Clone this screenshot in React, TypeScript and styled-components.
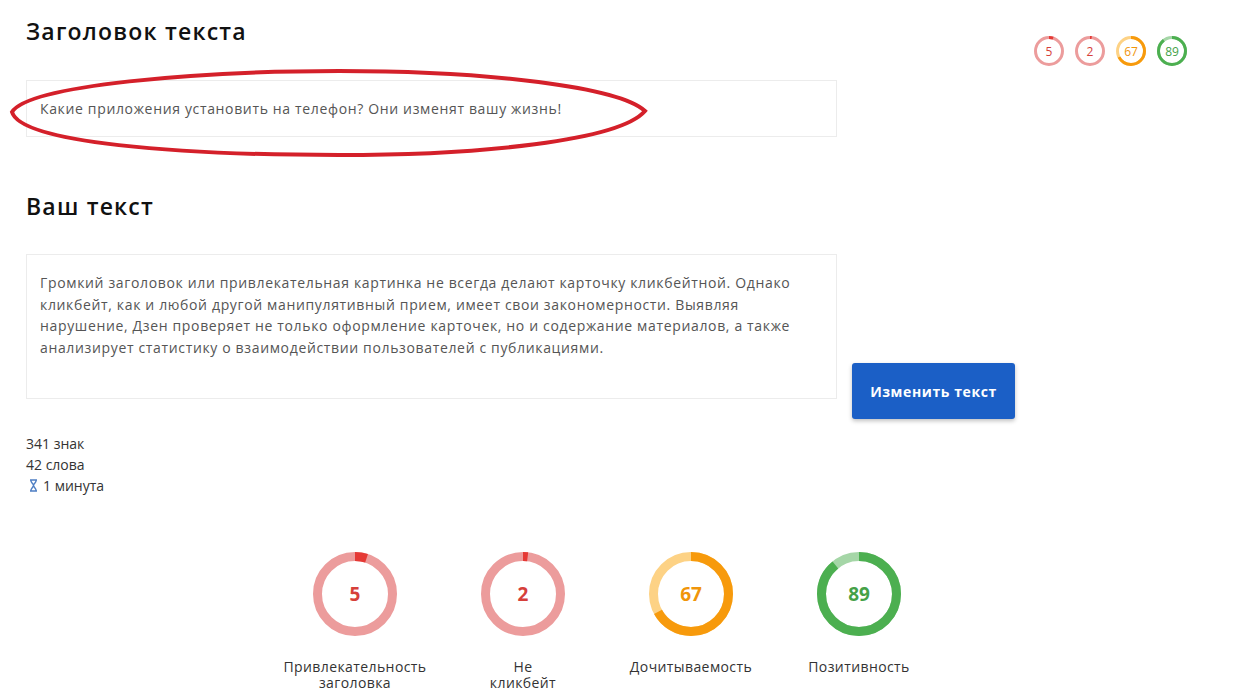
import React from 'react';
import styled, { createGlobalStyle } from 'styled-components';

const GlobalStyle = createGlobalStyle`
  body {
    margin: 0;
    background: #ffffff;
    font-family: 'Open Sans', 'Liberation Sans', sans-serif;
    color: #222;
  }
`;

type Tone = 'red' | 'orange' | 'green';

const tones: Record<Tone, { track: string; bar: string; text: string }> = {
  red: { track: '#ec9c9c', bar: '#e53935', text: '#d6403a' },
  orange: { track: '#fdd285', bar: '#f79a0c', text: '#f0950a' },
  green: { track: '#a5d6a7', bar: '#4caf50', text: '#45a148' },
};

const scores: { value: number; tone: Tone; label: React.ReactNode }[] = [
  { value: 5, tone: 'red', label: <>Привлекательность<br />заголовка</> },
  { value: 2, tone: 'red', label: <>Не<br />кликбейт</> },
  { value: 67, tone: 'orange', label: 'Дочитываемость' },
  { value: 89, tone: 'green', label: 'Позитивность' },
];

const Ring: React.FC<{ value: number; tone: Tone; size: number; stroke: number }> = ({
  value,
  tone,
  size,
  stroke,
}) => {
  const r = (size - stroke) / 2;
  const c = 2 * Math.PI * r;
  const t = tones[tone];
  return (
    <RingBox $size={size}>
      <svg width={size} height={size} viewBox={`0 0 ${size} ${size}`}>
        <circle cx={size / 2} cy={size / 2} r={r} fill="none" stroke={t.track} strokeWidth={stroke} />
        <circle
          cx={size / 2}
          cy={size / 2}
          r={r}
          fill="none"
          stroke={t.bar}
          strokeWidth={stroke}
          strokeDasharray={`${(c * value) / 100} ${c}`}
          transform={`rotate(-90 ${size / 2} ${size / 2})`}
        />
      </svg>
      <RingValue $color={t.text} $big={size > 50}>
        {value}
      </RingValue>
    </RingBox>
  );
};

export default function App() {
  return (
    <Page>
      <GlobalStyle />
      <Header>
        <Title>Заголовок текста</Title>
        <MiniRings>
          {scores.map((s, i) => (
            <Ring key={i} value={s.value} tone={s.tone} size={30} stroke={3} />
          ))}
        </MiniRings>
      </Header>

      <HeadlineField>
        Какие приложения установить на телефон? Они изменят вашу жизнь!
        <Annotation width="640" height="96" viewBox="0 0 640 96">
          <path
            d="M 3 47 C 20 20, 190 6, 330 6 C 480 6, 610 22, 636 46 C 610 76, 470 90, 330 90 C 170 90, 12 78, 3 47 Z"
            fill="none"
            stroke="#d4202a"
            strokeWidth="4"
          />
        </Annotation>
      </HeadlineField>

      <SubTitle>Ваш текст</SubTitle>

      <EditorRow>
        <TextField>
          Громкий заголовок или привлекательная картинка не всегда делают карточку кликбейтной. Однако
          кликбейт, как и любой другой манипулятивный прием, имеет свои закономерности. Выявляя
          нарушение, Дзен проверяет не только оформление карточек, но и содержание материалов, а также
          анализирует статистику о взаимодействии пользователей с публикациями.
        </TextField>
        <PrimaryButton>Изменить текст</PrimaryButton>
      </EditorRow>

      <Stats>
        <span>341 знак</span>
        <span>42 слова</span>
        <span>
          <svg width="9" height="13" viewBox="0 0 9 13">
            <path
              d="M1 1h7M1 12h7M1.8 1c0 3 2.7 3.8 2.7 5.5S1.8 9 1.8 12M7.2 1c0 3-2.7 3.8-2.7 5.5S7.2 9 7.2 12"
              fill="none"
              stroke="#4f7fc4"
              strokeWidth="1.4"
            />
          </svg>
          1 минута
        </span>
      </Stats>

      <ScoreGrid>
        {scores.map((s, i) => (
          <ScoreCell key={i}>
            <Ring value={s.value} tone={s.tone} size={84} stroke={9} />
            <ScoreLabel>{s.label}</ScoreLabel>
          </ScoreCell>
        ))}
      </ScoreGrid>
    </Page>
  );
}

const Page = styled.div`
  padding: 16px 54px 0 26px;
  width: 1241px;
  box-sizing: border-box;
`;

const Header = styled.div`
  display: flex;
  align-items: flex-start;
  justify-content: space-between;
  height: 30px;
`;

const Title = styled.h2`
  margin: 0;
  font-size: 23px;
  line-height: 30px;
  font-weight: 600;
  letter-spacing: 1.2px;
  color: #111;
`;

const MiniRings = styled.div`
  display: flex;
  gap: 11px;
  margin-top: 20px;
`;

const RingBox = styled.div<{ $size: number }>`
  position: relative;
  width: ${(p) => p.$size}px;
  height: ${(p) => p.$size}px;
  svg {
    display: block;
  }
`;

const RingValue = styled.span<{ $color: string; $big: boolean }>`
  position: absolute;
  inset: 0;
  display: flex;
  align-items: center;
  justify-content: center;
  color: ${(p) => p.$color};
  font-size: ${(p) => (p.$big ? '19px' : '12px')};
  font-weight: ${(p) => (p.$big ? 700 : 500)};
`;

const HeadlineField = styled.div`
  position: relative;
  width: 811px;
  box-sizing: border-box;
  height: 57px;
  margin-top: 34px;
  padding: 0 13px;
  border: 1px solid #ececec;
  font-size: 14px;
  line-height: 55px;
  letter-spacing: 0.65px;
  color: #555;
`;

const Annotation = styled.svg`
  position: absolute;
  left: -18px;
  top: -16px;
  pointer-events: none;
`;

const SubTitle = styled(Title)`
  margin-top: 54px;
`;

const EditorRow = styled.div`
  display: flex;
  align-items: flex-start;
  gap: 15px;
  margin-top: 33px;
`;

const TextField = styled.div`
  width: 811px;
  height: 145px;
  box-sizing: border-box;
  padding: 17px 13px;
  border: 1px solid #ececec;
  font-size: 14px;
  line-height: 21.5px;
  letter-spacing: 0.65px;
  color: #555;
`;

const PrimaryButton = styled.button`
  margin-top: 109px;
  width: 163px;
  height: 56px;
  border: none;
  border-radius: 3px;
  background: #1b5fc6;
  color: #fff;
  font-family: inherit;
  font-size: 14px;
  font-weight: 700;
  letter-spacing: 0.6px;
  box-shadow: 0 2px 4px rgba(0, 0, 0, 0.25);
`;

const Stats = styled.div`
  display: flex;
  flex-direction: column;
  margin-top: 14px;
  font-size: 14px;
  line-height: 21px;
  color: #333;
  span {
    display: flex;
    align-items: center;
    gap: 5px;
  }
  svg {
    margin-left: 3px;
  }
`;

const ScoreGrid = styled.div`
  display: grid;
  grid-template-columns: repeat(4, 168px);
  margin: 56px 0 0 245px;
`;

const ScoreCell = styled.div`
  display: flex;
  flex-direction: column;
  align-items: center;
`;

const ScoreLabel = styled.div`
  margin-top: 23px;
  font-size: 14px;
  line-height: 16px;
  text-align: center;
  letter-spacing: 0.4px;
  color: #333;
`;
